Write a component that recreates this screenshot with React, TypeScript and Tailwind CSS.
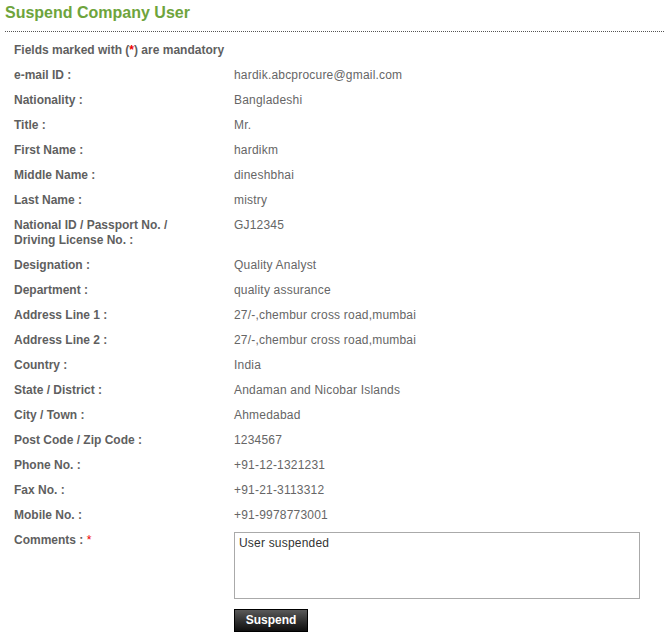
import React from "react";

const rows: { label: React.ReactNode; value: string }[] = [
  { label: "e-mail ID :", value: "hardik.abcprocure@gmail.com" },
  { label: "Nationality :", value: "Bangladeshi" },
  { label: "Title :", value: "Mr." },
  { label: "First Name :", value: "hardikm" },
  { label: "Middle Name :", value: "dineshbhai" },
  { label: "Last Name :", value: "mistry" },
  {
    label: (
      <>
        National ID / Passport No. /
        <br />
        Driving License No. :
      </>
    ),
    value: "GJ12345",
  },
  { label: "Designation :", value: "Quality Analyst" },
  { label: "Department :", value: "quality assurance" },
  { label: "Address Line 1 :", value: "27/-,chembur cross road,mumbai" },
  { label: "Address Line 2 :", value: "27/-,chembur cross road,mumbai" },
  { label: "Country :", value: "India" },
  { label: "State / District :", value: "Andaman and Nicobar Islands" },
  { label: "City / Town :", value: "Ahmedabad" },
  { label: "Post Code / Zip Code :", value: "1234567" },
  { label: "Phone No. :", value: "+91-12-1321231" },
  { label: "Fax No. :", value: "+91-21-3113312" },
  { label: "Mobile No. :", value: "+91-9978773001" },
];

export default function App() {
  return (
    <div
      className="w-[664px] h-[641px] bg-white text-[12px] leading-[15px] text-[#666]"
      style={{ fontFamily: '"Liberation Sans", Arial, sans-serif' }}
    >
      <div className="pl-[5px] pt-[3px]">
        <h1 className="text-[16px] leading-[19px] font-bold text-[#6ea43c]">Suspend Company User</h1>
        <div className="mt-[9px] border-t border-dotted border-[#555] w-[659px]" />
      </div>
      <div className="pl-[14px] pt-[6px]">
        <div className="font-bold text-[#5f5f5f] py-[5px]">
          Fields marked with (<span className="text-[#e00]">*</span>) are mandatory
        </div>
        {rows.map((r, i) => (
          <div key={i} className="flex py-[5px]">
            <div className="w-[220px] font-bold text-[#5f5f5f]">{r.label}</div>
            <div className="text-[#666] tracking-[0.2px]">{r.value}</div>
          </div>
        ))}
        <div className="flex pt-[4px]">
          <div className="w-[220px] font-bold text-[#5f5f5f] pt-[1px]">
            Comments : <span className="text-[#e00] font-normal">*</span>
          </div>
          <div className="flex flex-col">
            <div className="w-[406px] h-[67px] border border-[#aaa] px-[4px] py-[3px] text-[#333] tracking-[0.2px]">
              User suspended
            </div>
            <button className="mt-[10px] w-[74px] h-[23px] border border-black bg-gradient-to-b from-[#5a5a5a] to-[#101010] text-white font-bold text-[12px]">
              Suspend
            </button>
          </div>
        </div>
      </div>
    </div>
  );
}
